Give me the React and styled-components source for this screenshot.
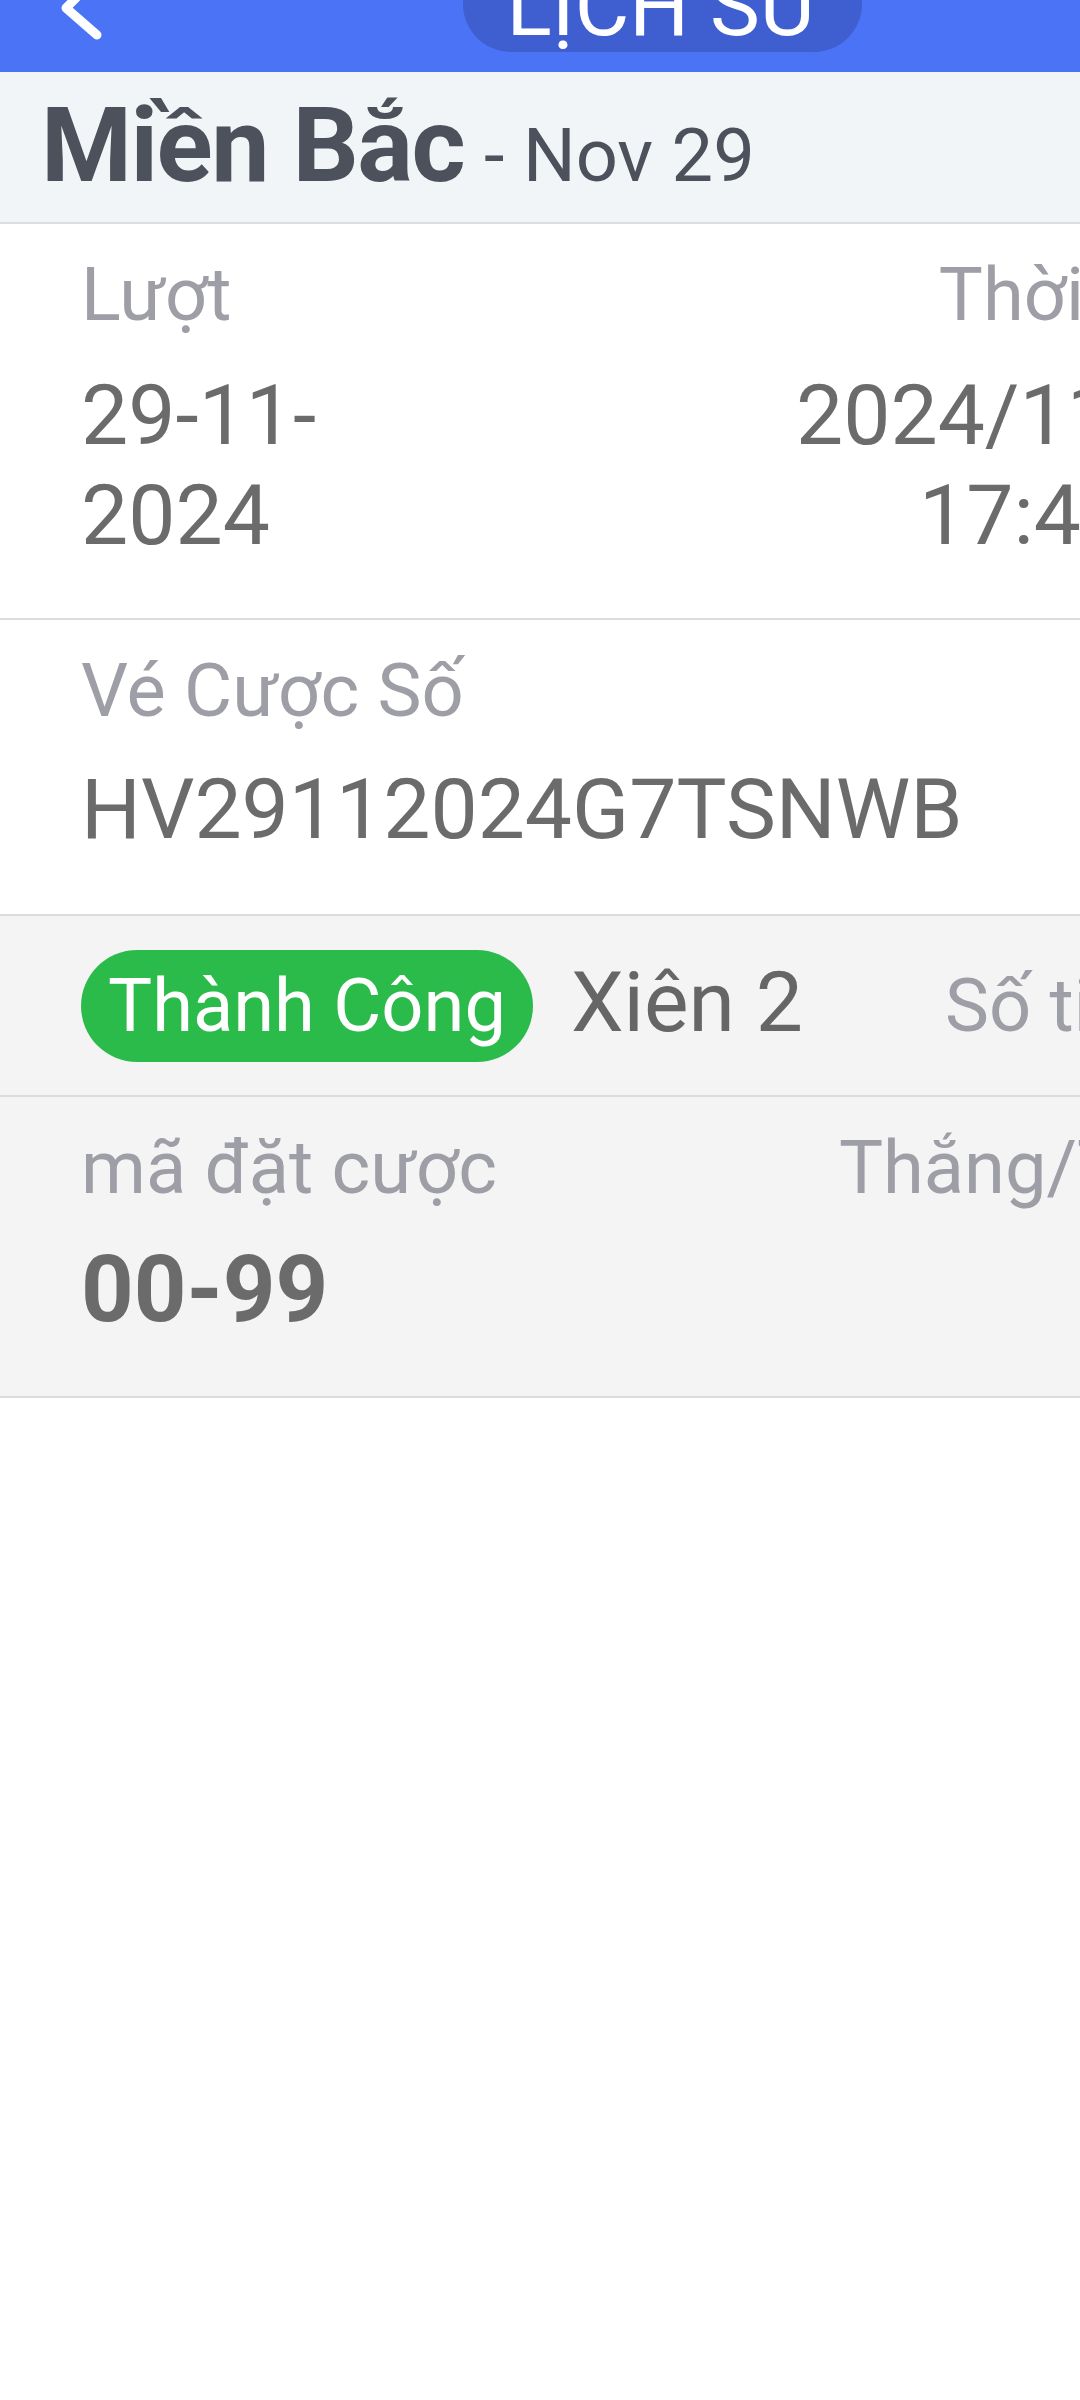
import React from "react";
import styled, { createGlobalStyle } from "styled-components";

const Global = createGlobalStyle`
  html, body { margin: 0; padding: 0; background: #ffffff; }
  body { font-family: Roboto, "Noto Sans", "Liberation Sans", sans-serif; overflow-x: hidden; }
  #root { width: 1080px; min-height: 2400px; overflow: hidden; background: #ffffff; }
`;

const Page = styled.div`
  width: 1080px;
  overflow: hidden;
`;

const Header = styled.header`
  display: flex;
  align-items: flex-start;
  height: 72px;
  background: #4b73f5;
  overflow: hidden;
`;

const BackIcon = styled.svg`
  flex: none;
  margin-left: 55px;
  margin-top: -30px;
  width: 50px;
  height: 75px;
`;

const TitlePill = styled.div`
  flex: none;
  margin-left: 358px;
  margin-top: -50px;
  width: 399px;
  height: 102px;
  box-sizing: border-box;
  padding-bottom: 3px;
  display: flex;
  align-items: flex-end;
  justify-content: center;
  background: #3f5fd0;
  border-radius: 48px;
  color: #ffffff;
  font-size: 84px;
  line-height: 1;
  letter-spacing: 0;
`;

const RegionBar = styled.div`
  display: flex;
  align-items: baseline;
  height: 152px;
  box-sizing: border-box;
  padding: 22px 0 0 41px;
  background: #f2f5f7;
  border-bottom: 2px solid #dcdddf;
  color: #4d515c;
  white-space: nowrap;
`;

const RegionName = styled.span`
  font-size: 104px;
  font-weight: 700;
  line-height: 1;
  letter-spacing: -1.5px;
`;

const RegionDate = styled.span`
  font-size: 74px;
  line-height: 1;
  margin-left: 20px;
`;

const Section = styled.section`
  width: 1324px;
  box-sizing: border-box;
  padding: 34px 81px ${(p) => p.$bottom || 53}px;
  background: ${(p) => (p.$shade ? "#f4f4f4" : "#ffffff")};
  border-bottom: 2px solid #dcdcdc;
`;

const Pair = styled.div`
  display: flex;
  justify-content: space-between;
  align-items: flex-start;
`;

const Field = styled.div`
  display: flex;
  flex-direction: column;
  gap: ${(p) => p.$gap || 34}px;
  align-items: ${(p) => (p.$right ? "flex-end" : "flex-start")};
  text-align: ${(p) => (p.$right ? "right" : "left")};
  width: ${(p) => (p.$width ? `${p.$width}px` : "auto")};
`;

const Label = styled.div`
  font-size: 74px;
  line-height: 74px;
  color: #9d9ea6;
  white-space: nowrap;
`;

const Value = styled.div`
  font-size: ${(p) => (p.$bold ? 92 : 84)}px;
  line-height: 100px;
  color: #6b6b6b;
  font-weight: ${(p) => (p.$bold ? 700 : 400)};
`;

const StatusRow = styled.div`
  display: flex;
  align-items: baseline;
  gap: 38px;
  white-space: nowrap;
`;

const StatusBadge = styled.span`
  display: inline-block;
  height: 112px;
  padding: 0 27px;
  border-radius: 56px;
  background: #2bbb4b;
  color: #ffffff;
  font-size: 74px;
  line-height: 112px;
`;

const BetType = styled.span`
  font-size: 84px;
  line-height: 100px;
  color: #666666;
`;

const AmountLabel = styled.span`
  margin-left: 104px;
  font-size: 74px;
  line-height: 74px;
  color: #9d9ea6;
`;

export default function App() {
  return (
    <Page>
      <Global />
      <Header>
        <BackIcon viewBox="0 0 50 75" fill="none">
          <polyline
            points="42,7 11,38 42,65"
            stroke="#ffffff"
            strokeWidth="9"
            strokeLinecap="round"
            strokeLinejoin="round"
          />
        </BackIcon>
        <TitlePill>LỊCH SỬ</TitlePill>
      </Header>

      <RegionBar>
        <RegionName>Miền Bắc</RegionName>
        <RegionDate>- Nov 29</RegionDate>
      </RegionBar>

      <Section $bottom={52}>
        <Pair>
          <Field $width={290}>
            <Label>Lượt</Label>
            <Value>
              29-11-<wbr />2024
            </Value>
          </Field>
          <Field $right $width={500}>
            <Label>Thời gian</Label>
            <Value>
              2024/11/29
              <br />
              17:42:18
            </Value>
          </Field>
        </Pair>
      </Section>

      <Section $bottom={54}>
        <Field $gap={32}>
          <Label>Vé Cược Số</Label>
          <Value>HV29112024G7TSNWB</Value>
        </Field>
      </Section>

      <Section $shade $bottom={33}>
        <StatusRow>
          <StatusBadge>Thành Công</StatusBadge>
          <BetType>Xiên 2</BetType>
          <AmountLabel>Số tiền</AmountLabel>
        </StatusRow>
      </Section>

      <Section $shade $bottom={56}>
        <Pair>
          <Field $gap={35}>
            <Label>mã đặt cược</Label>
            <Value $bold>00-99</Value>
          </Field>
          <Field $right>
            <Label>Thắng/Thua</Label>
          </Field>
        </Pair>
      </Section>
    </Page>
  );
}
